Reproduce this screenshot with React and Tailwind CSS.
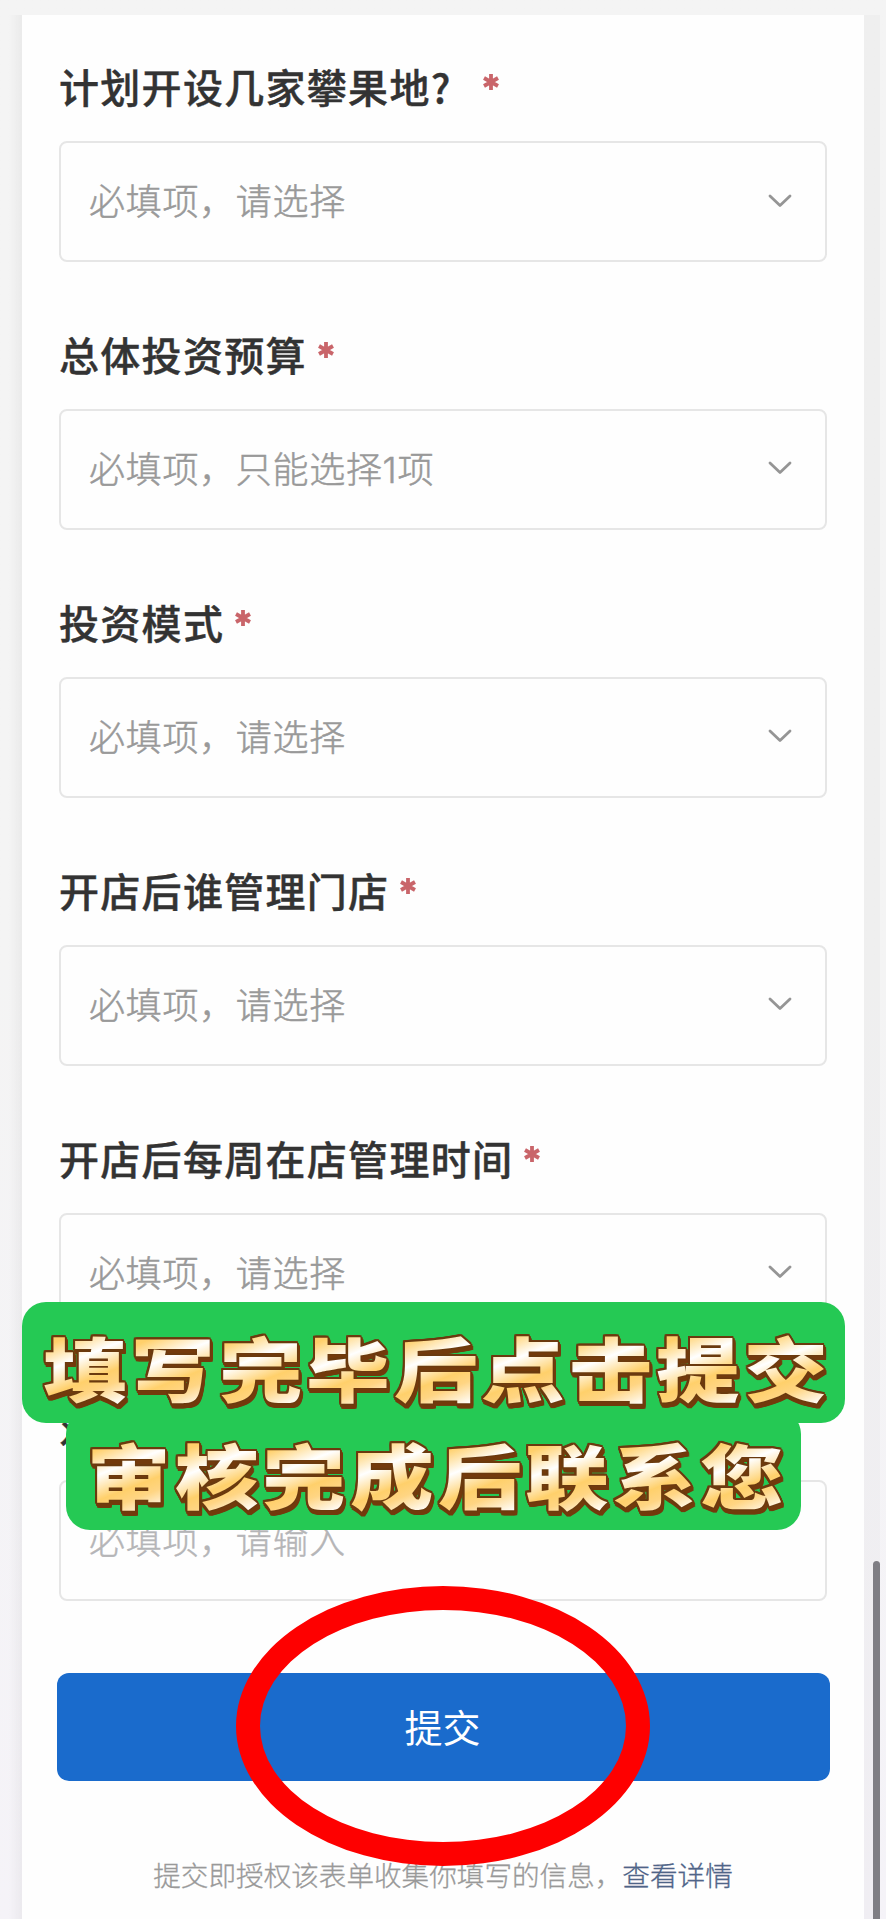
const FONT = 'font-["Noto_Sans_CJK_SC",sans-serif]'

// Campos del formulario, en orden de aparición.
const FIELDS = [
  { label: '计划开设几家攀果地?', placeholder: '必填项，请选择', wide: true },
  { label: '总体投资预算', placeholder: '必填项，只能选择1项' },
  { label: '投资模式', placeholder: '必填项，请选择' },
  { label: '开店后谁管理门店', placeholder: '必填项，请选择' },
  { label: '开店后每周在店管理时间', placeholder: '必填项，请选择' },
  { label: '对', placeholder: '必填项，请输入', input: true },
]

function Chevron() {
  return (
    <svg className="mb-[2px] h-[14px] w-[24px]" viewBox="0 0 24 14" fill="none" stroke="#959595" strokeWidth="2.8" strokeLinecap="round" strokeLinejoin="round">
      <path d="M2 2 L12 11.5 L22 2" />
    </svg>
  )
}

function Asterisk() {
  return (
    <svg className="h-4 w-4" viewBox="0 0 16 16" stroke="#c9656a" strokeWidth="3.8">
      <path d="M8 0 V16 M1 4 L15 12 M15 4 L1 12" />
    </svg>
  )
}

function Field({ label, placeholder, wide, input }) {
  return (
    <div className="h-[267.9px]">
      <div className="flex h-[68px] items-start">
        <span className="text-[40px] font-medium leading-[60px] tracking-[1.3px] text-[#333] [-webkit-text-stroke:0.4px_#333]">{label}</span>
        <span className={`pt-[18px] ${wide ? 'ml-[31px]' : 'ml-[11px]'}`}>
          {!input && <Asterisk />}
        </span>
      </div>
      <div className="mt-[17px] flex h-[121px] items-center justify-between rounded-lg border-2 border-[#e6e6e6] pl-[28px] pr-[33px]">
        <span className={`pt-px font-["Inter","Noto_Sans_CJK_SC",sans-serif] text-[36px] font-light leading-none tracking-[0.7px] ${input ? 'text-[#b5b5b7] [-webkit-text-stroke:0.4px_#b5b5b7]' : 'text-[#999] [-webkit-text-stroke:0.5px_#999]'}`}>
          {placeholder}
        </span>
        {!input && <Chevron />}
      </div>
    </div>
  )
}

// Texto dorado con contorno marrón y relieve hacia abajo a la derecha.
function GoldLine({ text }) {
  return (
    <div className="flex [filter:drop-shadow(1.2px_0_0_#6b3a0e)_drop-shadow(-1.2px_0_0_#6b3a0e)_drop-shadow(0_1.2px_0_#6b3a0e)_drop-shadow(0_-1.2px_0_#6b3a0e)_drop-shadow(1.5px_2px_0_#733a0c)_drop-shadow(1.5px_2px_0_#733a0c)]">
      {[...text].map((ch, i) => (
        <span
          key={i}
          className="flex w-[87.6px] scale-x-[1.1] scale-y-[0.93] justify-center bg-[linear-gradient(155deg,#ffd06b_22%,#fff_42%,#ffd06b_62%,#ffd583_72%,#fff_90%)] bg-clip-text text-[76px] font-black leading-[96px] text-transparent"
        >
          {ch}
        </span>
      ))}
    </div>
  )
}

export default function App() {
  return (
    <div className={`relative h-[1919px] w-[886px] overflow-hidden bg-linear-to-b from-[#f4f4f4] from-50% to-[#f5f3f8] pt-[15px] ${FONT}`}>
      <div className="flex h-full">
        <div className="w-[22px] shrink-0 bg-linear-to-r from-transparent from-40% to-black/4" />
        <main className="w-[842px] shrink-0 bg-[#fefefe] px-[37px] pt-[41px]">
          {FIELDS.map(f => <Field key={f.label} {...f} />)}
          <button className="-mx-[2px] mt-[10px] flex h-[108px] w-[773px] items-center justify-center rounded-xl bg-[#1a6bcc] pb-[3px] pr-[2px] text-[38px] leading-none text-white">
            提交
          </button>
          <p className="mt-[73px] whitespace-nowrap text-center text-[27.6px] font-light leading-[40px] text-[#999] [-webkit-text-stroke:0.3px]">
            提交即授权该表单收集你填写的信息，<a className="text-[#4f6488]">查看详情</a>
          </p>
        </main>
        <div className="w-4 shrink-0 bg-black/2" />
      </div>

      {/* Barra de desplazamiento */}
      <div className="absolute left-[873px] top-[1561px] h-[400px] w-[7px] rounded-full bg-[#7f7e84]" />

      {/* Rótulo superpuesto */}
      <div className="absolute left-[66px] top-[1410px] h-[120px] w-[735px] rounded-3xl bg-[#25c954]" />
      <div className="absolute left-[22px] top-[1302px] h-[121px] w-[823px] rounded-3xl bg-[#25c954]" />
      <div className="absolute left-[24px] top-[1302px] flex w-[823px] flex-col items-center pt-[16px]">
        <GoldLine text="填写完毕后点击提交" />
        <div className="mt-[11px]">
          <GoldLine text="审核完成后联系您" />
        </div>
      </div>

      {/* Círculo rojo alrededor del botón */}
      <div className="absolute left-[236px] top-[1586px] h-[280px] w-[414px] rounded-[50%] border-[24px] border-[#fe0000]" />
    </div>
  )
}
